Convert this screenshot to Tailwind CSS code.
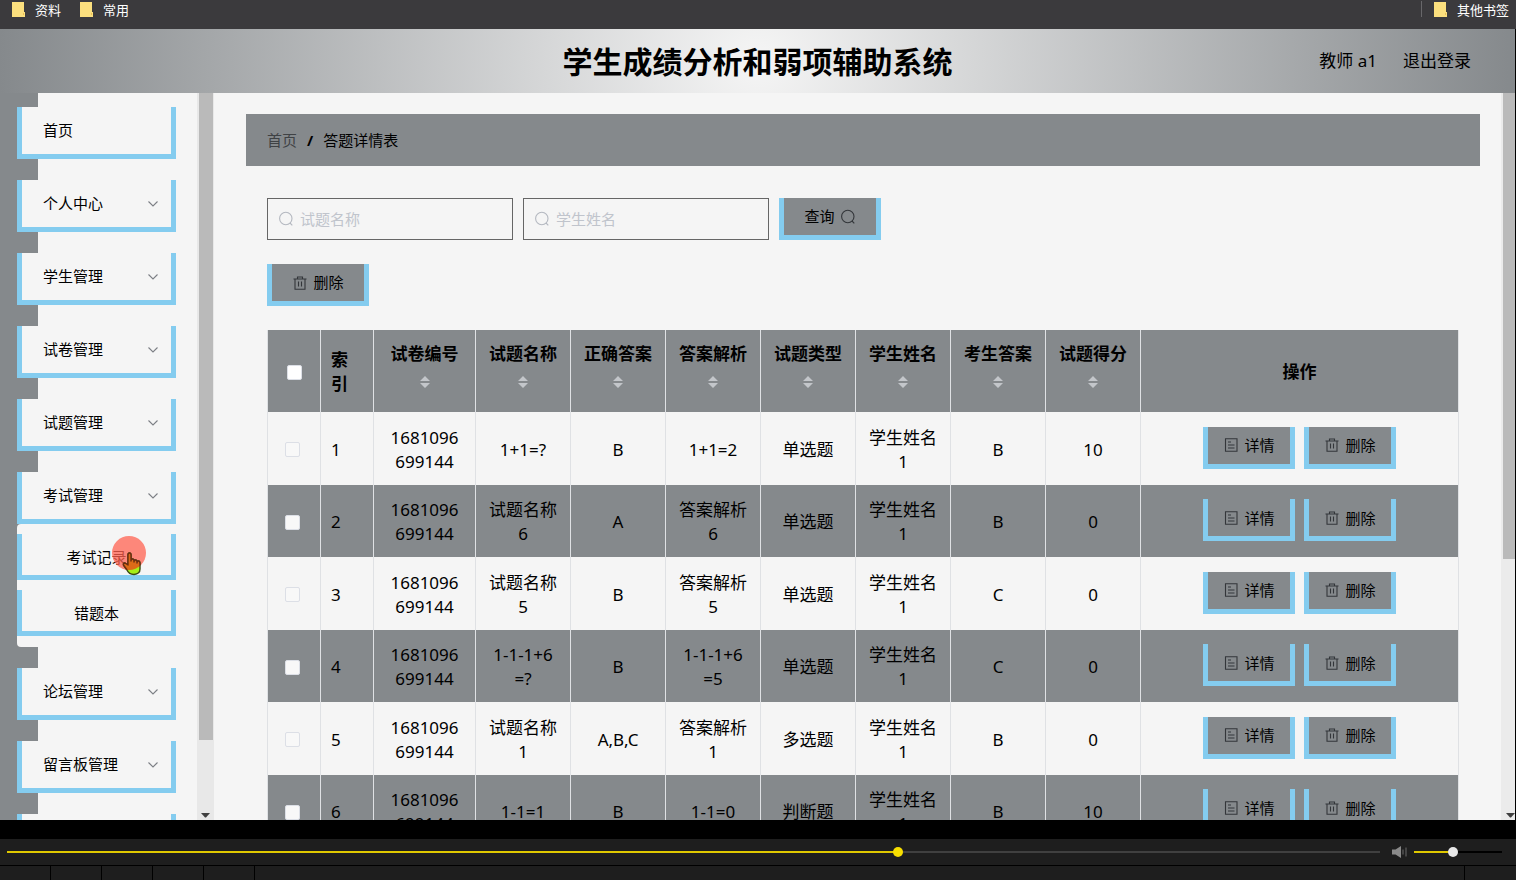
<!DOCTYPE html>
<html lang="zh-CN">

<head>
    <meta charset="UTF-8">
    <meta name="viewport" content="width=device-width, initial-scale=1.0">
    <title>学生成绩分析和弱项辅助系统</title>
    <script src="https://cdn.jsdelivr.net/npm/@tailwindcss/browser@4"></script>
</head>

<body class="flex h-screen flex-col overflow-hidden bg-black font-['Noto_Sans','Noto_Sans_CJK_SC',sans-serif] text-black">

    <!-- Icons -->
    <svg class="hidden">
        <symbol id="search" viewBox="0 0 16 16">
            <circle cx="7.8" cy="7.500" r="6.200" fill="none" stroke="currentColor" stroke-width="1.100" />
            <path d="M12 12L14.300 14.300" fill="none" stroke="currentColor" stroke-width="1.100" />
        </symbol>
        <symbol id="trash" viewBox="0 0 16 16">
            <path d="M1.500 4h13M3 4v10.300h10V4M5.500 4V2h5v2M6.500 6.500v5M9.500 6.500v5" fill="none" stroke="currentColor" stroke-width="1.100" />
        </symbol>
        <symbol id="detail" viewBox="0 0 16 16">
            <path d="M2.500 1.800h11.500v12.400h-11.500zM5 5h3M5 8h6.500M5 11h6.500" fill="none" stroke="currentColor" stroke-width="1.100" />
        </symbol>
        <symbol id="down" viewBox="0 0 12 12">
            <path d="M1.500 3.500L6 8L10.500 3.500" fill="none" stroke="currentColor" stroke-width="1.100" />
        </symbol>
        <symbol id="sort" viewBox="0 0 10 12">
            <path d="M0 5L5 0L10 5zM0 7h10L5 12z" fill="currentColor" />
        </symbol>
        <symbol id="folder" viewBox="0 0 13 15">
            <path d="M0 0h12v10h1v5H0z" fill="#fbdf7e" />
            <path d="M11 11h1v2h-1z" fill="#e8bd55" />
        </symbol>
    </svg>

    <!-- Bookmarks bar -->
    <div class="flex h-[29px] shrink-0 items-start gap-[19px] bg-[#3b3a3d] pl-3 pr-[7px] text-[13px] leading-5 text-white">
        <a href="#" class="flex gap-[10px]"><svg class="mt-[2px] h-[15px] w-[13px]"><use href="#folder" /></svg>资料</a>
        <a href="#" class="flex gap-[10px]"><svg class="mt-[2px] h-[15px] w-[13px]"><use href="#folder" /></svg>常用</a>
        <div class="ml-auto flex">
            <span class="mr-3 mt-px h-4 w-px bg-[#68676a]"></span>
            <a href="#" class="flex gap-[10px]"><svg class="mt-[2px] h-[15px] w-[13px]"><use href="#folder" /></svg>其他书签</a>
        </div>
    </div>

    <!-- Header -->
    <header class="mr-px grid h-16 shrink-0 grid-cols-[1fr_auto_1fr] items-center bg-[radial-gradient(circle,#f5f5f5_0%,#85898c_100%)]">
        <h1 class="col-start-2 text-[30px] font-bold">学生成绩分析和弱项辅助系统</h1>
        <div class="flex justify-end gap-[26px] pr-11 text-[17px]">
            <span>教师 a1</span>
            <a href="#">退出登录</a>
        </div>
    </header>

    <div class="mr-px flex min-h-0 flex-1 bg-[#f5f5f5]">

        <!-- Sidebar -->
        <nav id="menu" class="flex w-[197px] shrink-0 flex-col gap-[21px] overflow-hidden bg-[linear-gradient(to_right,#85898c_38px,#f5f5f5_38px)] pl-[17px] pr-[21px] pt-[14px] text-[15px]"></nav>
        <div class="flex w-[17px] shrink-0 flex-col items-center bg-[#e8e8e8]">
            <div class="h-[647px] w-[14px] bg-[#bababa]"></div>
            <svg class="mb-[2px] mt-auto h-[5px] w-[9px]" viewBox="0 0 9 5"><path d="M0 0h9L5 4.5H4z" fill="#404040" /></svg>
        </div>

        <!-- Content -->
        <main class="min-w-0 flex-1 overflow-hidden pl-8 pr-[21px] pt-[21px]">
            <div class="flex h-[52px] items-center gap-[10px] bg-[#85898c] px-[21px] text-[15px]">
                <a href="#" class="text-[#3f4245]">首页</a>
                <span class="font-bold">/</span>
                <span>答题详情表</span>
            </div>

            <div class="px-[21px] pt-8">
                <form class="flex items-end gap-[10px] text-[15px]">
                    <label class="flex h-[42px] w-[246px] items-center gap-[6px] border border-[#666] pl-[10px]">
                        <svg class="size-4 shrink-0 text-[#b4b8c0]"><use href="#search" /></svg>
                        <input type="text" aria-label="试题名称" placeholder="试题名称" class="w-full bg-transparent outline-none placeholder:text-[#c0c4cc]">
                    </label>
                    <label class="flex h-[42px] w-[246px] items-center gap-[6px] border border-[#666] pl-[10px]">
                        <svg class="size-4 shrink-0 text-[#b4b8c0]"><use href="#search" /></svg>
                        <input type="text" aria-label="学生姓名" placeholder="学生姓名" class="w-full bg-transparent outline-none placeholder:text-[#c0c4cc]">
                    </label>
                    <button type="button" class="flex h-[42px] w-[102px] items-center justify-center gap-[5px] border-x-[5px] border-b-[5px] border-[#84ccef] bg-[#85898c]">查询<svg class="size-4 text-[#33363a]"><use href="#search" /></svg></button>
                </form>

                <button type="button" class="mt-6 flex h-[42px] w-[102px] items-center justify-center gap-[5px] border-x-[5px] border-b-[5px] border-[#84ccef] bg-[#85898c] text-[15px]"><svg class="size-4 text-[#33363a]"><use href="#trash" /></svg>删除</button>

                <table class="mt-6 w-full table-fixed border-collapse text-center text-[17px] leading-6">
                    <colgroup>
                        <col class="w-[53px]">
                        <col class="w-[53px]">
                        <col class="w-[102px]">
                        <col span="7" class="w-[95px]">
                        <col>
                    </colgroup>
                    <thead>
                        <tr id="head" class="h-[82px] bg-[#85898c]"></tr>
                    </thead>
                    <tbody id="rows"></tbody>
                </table>
            </div>
        </main>

        <div class="flex w-[14px] shrink-0 flex-col items-end bg-[#ebebeb]">
            <div class="h-[466px] w-[12px] bg-[#bababa]"></div>
            <svg class="mb-[2px] mt-auto h-[5px] w-[9px]" viewBox="0 0 9 5"><path d="M0 0h9L5 4.5H4z" fill="#404040" /></svg>
        </div>
    </div>

    <!-- Player -->
    <div class="mt-[19px] flex h-[26px] shrink-0 items-center bg-[#1e1e1e] pl-[7px] pr-[14px]">
        <input type="range" aria-label="播放进度" min="0" max="1000" value="650"
            class="h-[11px] min-w-0 flex-1 appearance-none bg-transparent [&::-webkit-slider-runnable-track]:h-[2px] [&::-webkit-slider-runnable-track]:bg-[linear-gradient(to_right,#dfc800_65%,#404040_65%)] [&::-webkit-slider-thumb]:-mt-[4px] [&::-webkit-slider-thumb]:size-[10px] [&::-webkit-slider-thumb]:appearance-none [&::-webkit-slider-thumb]:rounded-full [&::-webkit-slider-thumb]:bg-[#f7de00]">
        <button type="button" aria-label="静音" class="ml-3 mr-[7px]">
            <svg class="h-3 w-[15px]" viewBox="0 0 15 12">
                <path d="M0 3.5h3.5L9 0v12L3.5 8.5H0z" fill="#8a8a8a" />
                <path d="M11 3.5v5M14 1.5v9" stroke="#6a6a6a" fill="none" />
            </svg>
        </button>
        <input type="range" aria-label="音量" min="0" max="100" value="44"
            class="h-[11px] w-[88px] appearance-none bg-transparent [&::-webkit-slider-runnable-track]:h-[2px] [&::-webkit-slider-runnable-track]:bg-[linear-gradient(to_right,#dfc800_44%,#000_44%)] [&::-webkit-slider-thumb]:-mt-[4px] [&::-webkit-slider-thumb]:size-[10px] [&::-webkit-slider-thumb]:appearance-none [&::-webkit-slider-thumb]:rounded-full [&::-webkit-slider-thumb]:bg-[#e8e8e8]">
    </div>
    <div class="mt-px flex h-[14px] shrink-0 gap-px">
        <div class="w-[50px] bg-[#1e1e1e]"></div>
        <div class="w-[50px] bg-[#1e1e1e]"></div>
        <div class="w-[50px] bg-[#1e1e1e]"></div>
        <div class="w-[50px] bg-[#1e1e1e]"></div>
        <div class="w-[50px] bg-[#1e1e1e]"></div>
        <div class="flex-1 bg-[#1e1e1e]"></div>
        <div class="w-[51px] bg-[#1e1e1e]"></div>
    </div>

    <script>
        const item = (name, arrow) => `
            <a href="#" class="flex h-[52px] shrink-0 items-center justify-between border-x-[5px] border-b-[5px] border-[#84ccef] bg-[#f5f5f5] pl-[21px] pr-[12px]">
                ${name}${arrow ? '<svg class="size-3 text-[#7c7f85]"><use href="#down" /></svg>' : ""}
            </a>`

        const submenu = `
            <div class="relative -mt-[21px] flex shrink-0 flex-col gap-[10px] rounded-[4px] bg-[#f5f5f5] pb-[11px] pt-[10px] text-center">
                <a href="#" class="h-[46px] border-x-[5px] border-b-[5px] border-[#84ccef] leading-[46px]">考试记录</a>
                <a href="#" class="h-[46px] border-x-[5px] border-b-[5px] border-[#84ccef] leading-[46px]">错题本</a>
                <svg class="absolute left-[95px] top-[11px] h-[42px] w-[36px]" viewBox="0 0 36 42">
                    <defs>
                        <clipPath id="dot"><circle cx="17" cy="18" r="17" /></clipPath>
                    </defs>
                    <circle cx="17" cy="18" r="17" fill="#ff6250" fill-opacity=".75" />
                    <g stroke-linejoin="round">
                        <path d="M16 30V20q0-2 1.500-2T19 20v6q0-2 1.500-2T22 26v1q0-2 1.500-2T25 27v1q0-2 1.500-2T28 29v5q0 5-6 5.500q-5 0-7-4.500l-3.500-5q-.5-2 1.500-2z" fill="#a6ee18" stroke="#3b4a12" stroke-width="1.400" />
                        <path d="M16 30V20q0-2 1.500-2T19 20v6q0-2 1.500-2T22 26v1q0-2 1.500-2T25 27v1q0-2 1.500-2T28 29v5q0 5-6 5.500q-5 0-7-4.500l-3.500-5q-.5-2 1.500-2z" fill="#dc6a18" stroke="#6b2c10" stroke-width="1.400" clip-path="url(#dot)" />
                    </g>
                </svg>
            </div>`

        document.getElementById("menu").innerHTML =
            item("首页", false) +
            ["个人中心", "学生管理", "试卷管理", "试题管理", "考试管理"].map(n => item(n, true)).join("") +
            submenu +
            ["论坛管理", "留言板管理", ""].map(n => item(n, true)).join("")

        const columns = ["试卷编号", "试题名称", "正确答案", "答案解析", "试题类型", "学生姓名", "考生答案", "试题得分"]

        document.getElementById("head").innerHTML = `
            <th class="border-x border-[#dfe1e4] pl-[19px] pt-[2px] text-left"><input type="checkbox" aria-label="全选" class="block size-[15px] appearance-none rounded-[2px] border border-[#dcdfe6] bg-white"></th>
            <th class="border-x border-[#dfe1e4] px-[10px] pt-[2px] text-left">索引</th>
            ${columns.map(c => `
            <th class="border-x border-[#dfe1e4] pb-[2px]">
                ${c}
                <span class="flex h-[33px] items-center justify-center"><svg class="h-3 w-[10px] text-[#c3c6ca]"><use href="#sort" /></svg></span>
            </th>`).join("")}
            <th class="border-x border-[#dfe1e4] pt-[2px]">操作</th>`

        const data = [
            ["1681096<br>699144", "1+1=?", "B", "1+1=2", "单选题", "学生姓名<br>1", "B", "10"],
            ["1681096<br>699144", "试题名称<br>6", "A", "答案解析<br>6", "单选题", "学生姓名<br>1", "B", "0"],
            ["1681096<br>699144", "试题名称<br>5", "B", "答案解析<br>5", "单选题", "学生姓名<br>1", "C", "0"],
            ["1681096<br>699144", "1-1-1+6<br>=?", "B", "1-1-1+6<br>=5", "单选题", "学生姓名<br>1", "C", "0"],
            ["1681096<br>699144", "试题名称<br>1", "A,B,C", "答案解析<br>1", "多选题", "学生姓名<br>1", "B", "0"],
            ["1681096<br>699144", "1-1=1", "B", "1-1=0", "判断题", "学生姓名<br>1", "B", "10"],
        ]

        document.getElementById("rows").innerHTML = data.map((row, i) => `
            <tr class="h-[73px] even:h-[72px] even:bg-[#85898c]">
                <td class="border-x border-[#dfe1e4] pl-[17px] pt-[2px]"><input type="checkbox" aria-label="选择第${i + 1}行" class="block size-[15px] appearance-none rounded-[2px] border border-[#dcdfe6] bg-[#f8f8f8]"></td>
                <td class="border-x border-[#dfe1e4] px-[10px] pt-[2px] text-left">${i + 1}</td>
                ${row.map(v => `<td class="border-x border-[#dfe1e4] pt-[2px]">${v}</td>`).join("")}
                <td class="border-x border-[#dfe1e4] pb-[2px]">
                    <div class="flex justify-center gap-[9px] text-[15px]">
                        <button type="button" class="flex h-[42px] w-[92px] items-center justify-center gap-[5px] border-x-[5px] border-b-[5px] border-[#84ccef] bg-[#85898c]"><svg class="size-4 text-[#33363a]"><use href="#detail" /></svg>详情</button>
                        <button type="button" class="flex h-[42px] w-[92px] items-center justify-center gap-[5px] border-x-[5px] border-b-[5px] border-[#84ccef] bg-[#85898c]"><svg class="size-4 text-[#33363a]"><use href="#trash" /></svg>删除</button>
                    </div>
                </td>
            </tr>`).join("")
    </script>
</body>

</html>
